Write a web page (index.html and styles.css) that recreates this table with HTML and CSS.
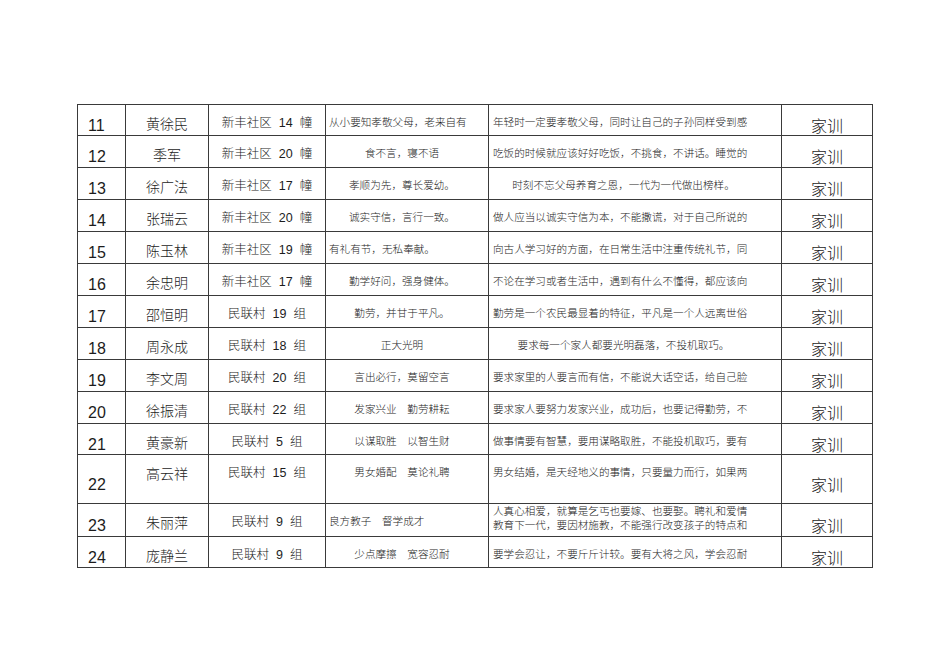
FILE: index.html
```html
<!DOCTYPE html>
<html lang="zh-CN">
<head>
<meta charset="utf-8">
<title>家训</title>
<link rel="stylesheet" href="styles.css">
</head>
<body>
<div class="sheet">
  <div class="grid">
    <div class="num">11</div><div class="name">黄徐民</div><div class="loc">新丰社区&nbsp; 14&nbsp; 幢</div><div class="c4 l">从小要知孝敬父母，老来自有</div><div class="c5">年轻时一定要孝敬父母，同时让自己的子孙同样受到感</div><div class="motto">家训</div>
    <div class="num">12</div><div class="name">季军</div><div class="loc">新丰社区&nbsp; 20&nbsp; 幢</div><div class="c4 c">食不言，寝不语</div><div class="c5">吃饭的时候就应该好好吃饭，不挑食，不讲话。睡觉的</div><div class="motto">家训</div>
    <div class="num">13</div><div class="name">徐广法</div><div class="loc">新丰社区&nbsp; 17&nbsp; 幢</div><div class="c4 c">孝顺为先，尊长爱幼。</div><div class="c5 c">时刻不忘父母养育之恩，一代为一代做出榜样。</div><div class="motto">家训</div>
    <div class="num">14</div><div class="name">张瑞云</div><div class="loc">新丰社区&nbsp; 20&nbsp; 幢</div><div class="c4 c">诚实守信，言行一致。</div><div class="c5">做人应当以诚实守信为本，不能撒谎，对于自己所说的</div><div class="motto">家训</div>
    <div class="num">15</div><div class="name">陈玉林</div><div class="loc">新丰社区&nbsp; 19&nbsp; 幢</div><div class="c4 l">有礼有节，无私奉献。</div><div class="c5">向古人学习好的方面，在日常生活中注重传统礼节，同</div><div class="motto">家训</div>
    <div class="num">16</div><div class="name">余忠明</div><div class="loc">新丰社区&nbsp; 17&nbsp; 幢</div><div class="c4 c">勤学好问，强身健体。</div><div class="c5">不论在学习或者生活中，遇到有什么不懂得，都应该向</div><div class="motto">家训</div>
    <div class="num">17</div><div class="name">邵恒明</div><div class="loc">民联村&nbsp; 19&nbsp; 组</div><div class="c4 c">勤劳，并甘于平凡。</div><div class="c5">勤劳是一个农民最显着的特征，平凡是一个人远离世俗</div><div class="motto">家训</div>
    <div class="num">18</div><div class="name">周永成</div><div class="loc">民联村&nbsp; 18&nbsp; 组</div><div class="c4 c">正大光明</div><div class="c5 c">要求每一个家人都要光明磊落，不投机取巧。</div><div class="motto">家训</div>
    <div class="num">19</div><div class="name">李文周</div><div class="loc">民联村&nbsp; 20&nbsp; 组</div><div class="c4 c">言出必行，莫留空言</div><div class="c5">要求家里的人要言而有信，不能说大话空话，给自己脸</div><div class="motto">家训</div>
    <div class="num">20</div><div class="name">徐振清</div><div class="loc">民联村&nbsp; 22&nbsp; 组</div><div class="c4 c">发家兴业　勤劳耕耘</div><div class="c5">要求家人要努力发家兴业，成功后，也要记得勤劳，不</div><div class="motto">家训</div>
    <div class="num">21</div><div class="name">黄豪新</div><div class="loc">民联村&nbsp; 5&nbsp; 组</div><div class="c4 c">以谋取胜　以智生财</div><div class="c5">做事情要有智慧，要用谋略取胜，不能投机取巧，要有</div><div class="motto">家训</div>
    <div class="num">22</div><div class="name">高云祥</div><div class="loc">民联村&nbsp; 15&nbsp; 组</div><div class="c4 c">男女婚配　莫论礼聘</div><div class="c5">男女结婚，是天经地义的事情，只要量力而行，如果两</div><div class="motto">家训</div>
    <div class="num">23</div><div class="name">朱丽萍</div><div class="loc">民联村&nbsp; 9&nbsp; 组</div><div class="c4 l">良方教子　督学成才</div><div class="c5 two"><span class="lines">人真心相爱，就算是乞丐也要嫁、也要娶。聘礼和爱情<br>教育下一代，要因材施教，不能强行改变孩子的特点和</span></div><div class="motto">家训</div>
    <div class="num">24</div><div class="name">庞静兰</div><div class="loc">民联村&nbsp; 9&nbsp; 组</div><div class="c4 c">少点摩擦　宽容忍耐</div><div class="c5">要学会忍让，不要斤斤计较。要有大将之风，学会忍耐</div><div class="motto">家训</div>
  </div>
</div>
</body>
</html>
```

FILE: styles.css
```css
html, body {
  margin: 0;
  padding: 0;
  background: #ffffff;
}

.sheet {
  padding: 104px 0 0 77px;
}

.grid {
  display: grid;
  grid-template-columns: 48px 83px 117px 163px 293px 91px;
  grid-template-rows: 31px repeat(9, 32px) 31px 49px 33px 31px;
  width: max-content;
  border-left: 1px solid #3a3a3a;
  border-top: 1px solid #3a3a3a;
}

.grid > div {
  box-sizing: border-box;
  border-right: 1px solid #3a3a3a;
  border-bottom: 1px solid #3a3a3a;
  overflow: hidden;
  white-space: nowrap;
  color: #1c1c1c;
  font-family: "Noto Sans CJK SC", sans-serif;
  font-weight: 300;
}

.grid > .num {
  display: flex;
  align-items: center;
  padding: 11px 0 0 10px;
  font-family: "Liberation Sans", "Noto Sans CJK SC", sans-serif;
  font-weight: 400;
  font-size: 16px;
  line-height: 20px;
}

.grid > .name {
  padding-top: 8px;
  text-align: center;
  font-size: 14px;
  line-height: 20px;
}

.grid > .loc {
  padding-top: 8px;
  text-align: center;
  font-family: "Liberation Sans", "Noto Sans CJK SC", sans-serif;
  font-size: 12.5px;
  line-height: 20px;
}

.grid > .c4,
.grid > .c5 {
  padding-top: 9px;
  font-size: 10.6px;
  line-height: 16px;
}

.grid > .c4.l {
  padding-left: 3px;
}

.grid > .c4.c {
  text-align: center;
  padding-right: 10px;
}

.grid > .c5 {
  padding-left: 4px;
}

.grid > .c5.c {
  text-align: center;
  padding-left: 0;
  padding-right: 23px;
}

.grid > .c5.two {
  padding-top: 0;
  line-height: 14px;
}

.lines {
  display: block;
}

.grid > .motto {
  display: flex;
  align-items: center;
  justify-content: center;
  padding-top: 9px;
  font-size: 16px;
  line-height: 20px;
}
```
